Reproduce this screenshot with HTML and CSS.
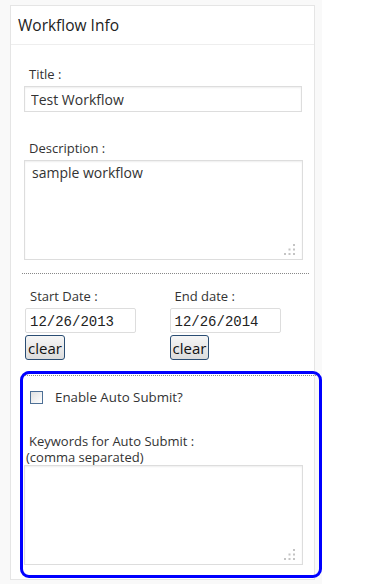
FILE: index.html
```html
<!DOCTYPE html>
<html>
<head>
    <title>Workflow Info</title>
    <meta name="viewport" content="width=device-width, initial-scale=1">
    <link rel="stylesheet" href="styles.css">
</head>
<body>
<div id="page-wrapper">
    <div class="postbox">
        <h3 class="box-title">Workflow Info</h3>
        <div class="box-inside">
            <div class="field title-field">
                <label class="field-label">Title :</label>
                <input type="text" class="text-input" value="Test Workflow">
            </div>
            <div class="field desc-field">
                <label class="field-label">Description :</label>
                <div class="area-wrap">
                    <textarea class="text-area">sample workflow</textarea>
                    <svg class="grip" width="11" height="11" viewBox="0 0 11 11">
                        <rect x="9" y="0" width="2" height="2"/>
                        <rect x="4.5" y="4.5" width="2" height="2"/>
                        <rect x="9" y="4.5" width="2" height="2"/>
                        <rect x="0" y="9" width="2" height="2"/>
                        <rect x="4.5" y="9" width="2" height="2"/>
                        <rect x="9" y="9" width="2" height="2"/>
                    </svg>
                </div>
            </div>
            <div class="separator"></div>
            <div class="date-row">
                <div class="date-col">
                    <label class="field-label">Start Date :</label>
                    <input type="text" class="date-input" value="12/26/2013">
                    <button class="clear-button">clear</button>
                </div>
                <div class="date-col">
                    <label class="field-label">End date :</label>
                    <input type="text" class="date-input" value="12/26/2014">
                    <button class="clear-button">clear</button>
                </div>
            </div>
            <div class="auto-submit">
                <div class="separator"></div>
                <div class="check-row">
                    <span class="check-box"></span>
                    <span class="check-label">Enable Auto Submit?</span>
                </div>
                <label class="field-label keywords-label">Keywords for Auto Submit :</label>
                <div class="hint">(comma separated)</div>
                <div class="area-wrap">
                    <textarea class="text-area"></textarea>
                    <svg class="grip" width="11" height="11" viewBox="0 0 11 11">
                        <rect x="9" y="0" width="2" height="2"/>
                        <rect x="4.5" y="4.5" width="2" height="2"/>
                        <rect x="9" y="4.5" width="2" height="2"/>
                        <rect x="0" y="9" width="2" height="2"/>
                        <rect x="4.5" y="9" width="2" height="2"/>
                        <rect x="9" y="9" width="2" height="2"/>
                    </svg>
                </div>
            </div>
        </div>
    </div>
</div>
</body>
</html>
```

FILE: styles.css
```css
html, body {
    margin: 0px;
    padding: 0px;
    background-color: #ffffff;
    font-family: "Open Sans", sans-serif;
    color: #333333;
}

#page-wrapper {
    width: 322px;
    height: 584px;
    background-color: #f9f9f9;
    padding: 5px 0px 0px 10px;
    box-sizing: border-box;
}

.postbox {
    width: 305px;
    height: 575px;
    box-sizing: border-box;
    background-color: #ffffff;
    border: 1px solid #e5e5e5;
}

.box-title {
    margin: 0px;
    height: 39px;
    padding: 8px 0px 0px 7px;
    box-sizing: border-box;
    font-size: 15.5px;
    font-weight: normal;
    color: #222222;
    border-bottom: 1px solid #eeeeee;
}

.box-inside {
    padding: 20px 0px 0px 0px;
}

.field {
    padding: 0px 11px 0px 13px;
}

.title-field {
    margin-bottom: 27px;
}

.desc-field {
    margin-bottom: 13px;
}

.field-label {
    display: block;
    font-size: 13px;
    line-height: 18px;
    padding-left: 5px;
    margin-bottom: 3px;
    color: #333333;
}

.text-input {
    display: block;
    width: 278px;
    height: 26px;
    box-sizing: border-box;
    border: 1px solid #dddddd;
    box-shadow: inset 0px 1px 2px rgba(0, 0, 0, 0.07);
    font-family: "Open Sans", sans-serif;
    font-size: 14px;
    color: #333333;
    padding: 0px 6px;
    margin: 0px;
}

.area-wrap {
    position: relative;
    width: 279px;
}

.text-area {
    display: block;
    width: 279px;
    height: 100px;
    box-sizing: border-box;
    border: 1px solid #dddddd;
    box-shadow: inset 0px 1px 2px rgba(0, 0, 0, 0.07);
    font-family: "Open Sans", sans-serif;
    font-size: 14px;
    color: #333333;
    padding: 2px 7px;
    margin: 0px;
    resize: none;
}

.grip {
    position: absolute;
    right: 8px;
    bottom: 5px;
    fill: #c4c4c4;
}

.separator {
    margin: 0px 5px 0px 11px;
    border-top: 1px dotted #888888;
}

.date-row {
    display: flex;
    padding: 13px 0px 0px 14px;
}

.date-col {
    width: 146px;
}

.date-input {
    display: block;
    width: 111px;
    height: 25px;
    box-sizing: border-box;
    border: 1px solid #dddddd;
    border-radius: 2px;
    font-family: "Liberation Mono", monospace;
    font-size: 14px;
    color: #222222;
    padding: 2px 4px 0px 4px;
    margin: 2px 0px 2px 0px;
}

.clear-button {
    display: block;
    height: 25px;
    padding: 0px 2px;
    border: 1px solid #2a4d73;
    border-radius: 3px;
    background: linear-gradient(#f6f6f6, #dcdcdc);
    font-family: "Open Sans", sans-serif;
    font-size: 15px;
    color: #111111;
}

.auto-submit {
    margin: 11px 0px 0px 9px;
    width: 302px;
    height: 207px;
    box-sizing: border-box;
    border: 3px solid #0000ff;
    border-radius: 9px;
    padding-top: 1px;
}

.auto-submit .separator {
    margin: 0px 3px 0px 2px;
}

.check-row {
    display: flex;
    align-items: center;
    padding: 12px 0px 0px 7px;
}

.check-box {
    width: 11px;
    height: 11px;
    border: 1px solid #4d6f95;
    background: linear-gradient(135deg, #e0e0e0, #ffffff);
    margin-right: 12px;
}

.check-label {
    font-size: 13.3px;
    line-height: 18px;
    color: #333333;
}

.keywords-label {
    margin: 27px 0px 0px 1px;
    font-size: 13px;
    line-height: 16px;
}

.hint {
    font-size: 13px;
    line-height: 16px;
    padding-left: 3px;
    margin-bottom: 0px;
}

.auto-submit .area-wrap {
    margin-left: 1px;
}
```
